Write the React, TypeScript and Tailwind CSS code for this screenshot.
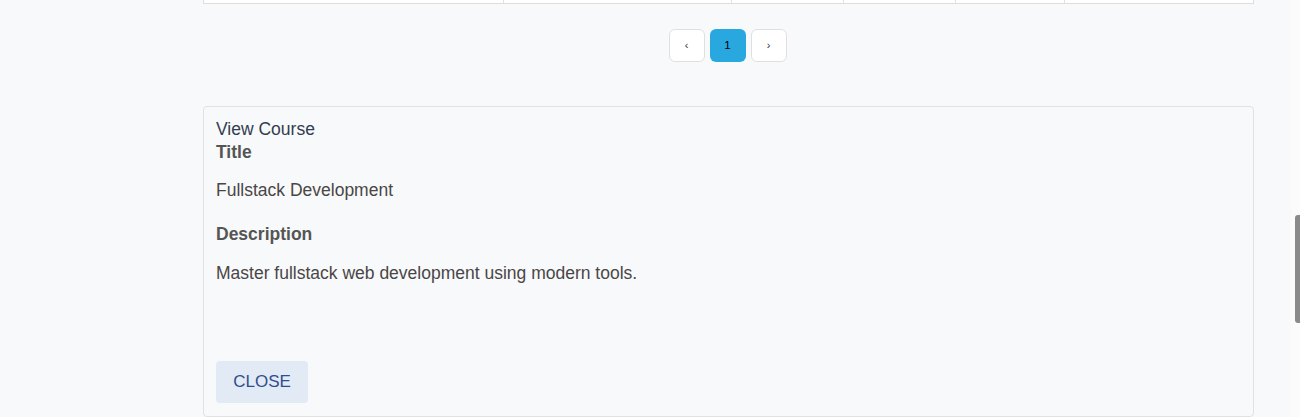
import React from "react";

const columns = [300, 228, 113, 112, 109, 188];

export default function App() {
  return (
    <div
      className="relative h-[417px] w-[1300px] overflow-hidden bg-[#f8f9fb] text-[#333]"
      style={{ fontFamily: '"Liberation Sans", Arial, sans-serif' }}
    >
      <div className="ml-[203px] w-[1051px]">
        {/* Bottom edge of the table above */}
        <div className="flex h-[4px] border-x border-b border-[#dedede] bg-white">
          {columns.map((w, i) => (
            <div
              key={i}
              className="h-full border-r border-[#e2e2e2] last:border-r-0"
              style={{ width: w }}
            />
          ))}
        </div>

        {/* Pagination */}
        <div className="mt-[25px] flex justify-center gap-[5px] pr-[2px]">
          <button className="flex h-[33px] w-[36px] items-center justify-center rounded-[6px] border border-[#e0e0e0] bg-white text-[11px] text-[#333]">
            ‹
          </button>
          <button className="flex h-[33px] w-[36px] items-center justify-center rounded-[6px] bg-[#29a8e0] text-[11.5px] text-black">
            1
          </button>
          <button className="flex h-[33px] w-[36px] items-center justify-center rounded-[6px] border border-[#e0e0e0] bg-white text-[11px] text-[#333]">
            ›
          </button>
        </div>

        {/* View course panel */}
        <div className="mt-[44px] rounded-[4px] border border-[#e1e1e3] bg-[#f8f9fb] px-[12px] pt-[13px] pb-[13px]">
          <div className="text-[17.5px] leading-[18px] text-[#333d4f]">View Course</div>
          <div className="mt-[5px] text-[17.5px] font-bold leading-[18px] text-[#555]">Title</div>
          <p className="mt-[20px] text-[17.5px] leading-[18px] text-[#4a4646]">Fullstack Development</p>
          <div className="mt-[26px] text-[17.5px] font-bold leading-[18px] text-[#555]">Description</div>
          <p className="mt-[21px] text-[17.5px] leading-[18px] text-[#4a4646]">
            Master fullstack web development using modern tools.
          </p>
          <button className="mt-[79px] h-[42px] w-[92px] rounded-[4px] bg-[#e2eaf6] text-[17px] text-[#2f4f8c]">
            CLOSE
          </button>
        </div>
      </div>

      {/* Scrollbar */}
      <div className="absolute right-0 top-0 h-full w-[9px] bg-[#fbfbfc]">
        <div className="absolute right-0 top-[215px] h-[108px] w-[5px] rounded-l-[3px] bg-[#8a8a8a]" />
      </div>
    </div>
  );
}
